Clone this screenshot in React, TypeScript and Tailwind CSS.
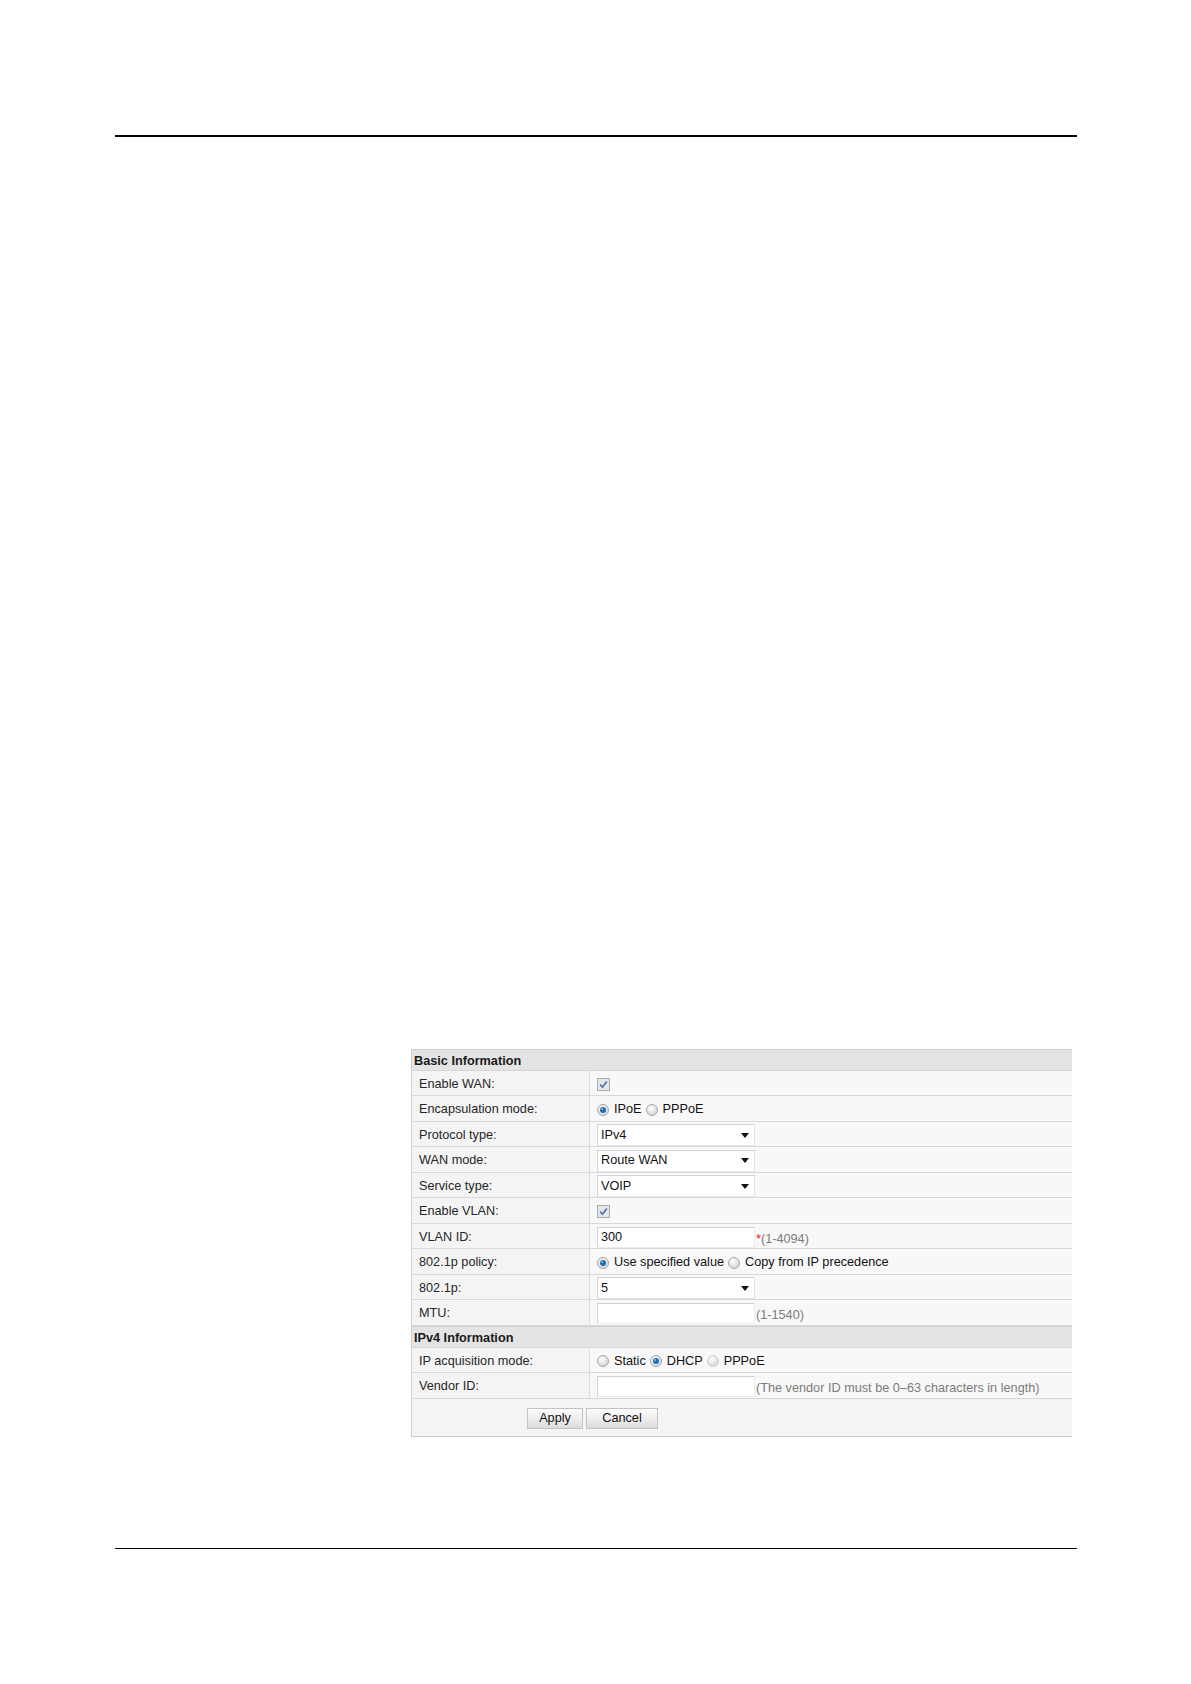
const font = { fontFamily: '"Liberation Sans", Arial, sans-serif' }

function Checkbox() {
  return (
    <svg width="13" height="13" viewBox="0 0 13 13" className="block">
      <rect x="0.5" y="0.5" width="12" height="12" fill="#e4e6ea" stroke="#a9abb0" />
      <path d="M3.2 6.6 L5.4 9.2 L9.8 3.4" fill="none" stroke="#4d6fa8" strokeWidth="1.6" />
    </svg>
  )
}

function Radio({ checked, dim }: { checked?: boolean; dim?: boolean }) {
  return (
    <svg width="12" height="12" viewBox="0 0 12 12" className="block shrink-0">
      <defs>
        <radialGradient id="rg" cx="0.4" cy="0.35" r="0.7">
          <stop offset="0" stopColor="#ffffff" />
          <stop offset="1" stopColor="#cfd1d4" />
        </radialGradient>
      </defs>
      <circle cx="6" cy="6" r="5.5" fill="url(#rg)" stroke={dim ? '#d4d4d4' : '#a8a8a8'} />
      {checked && <circle cx="6" cy="6" r="3" fill="#1f6db3" />}
      {checked && <circle cx="5.2" cy="5.1" r="1" fill="#8ec0ee" />}
    </svg>
  )
}

function Select({ value }: { value: string }) {
  return (
    <div className="flex h-[22px] w-[158px] items-center justify-between border border-[#d2d2d2] border-b-[#e6e6e6] border-r-[#e6e6e6] bg-white pl-[3px] pr-[5px]">
      <span>{value}</span>
      <svg width="8" height="5" viewBox="0 0 8 5" className="block">
        <path d="M0 0 H8 L4 5 Z" fill="#111" />
      </svg>
    </div>
  )
}

function Input({ value }: { value?: string }) {
  return (
    <div className="flex h-[21px] w-[158px] shrink-0 items-center border border-[#d2d2d2] border-b-[#ebebeb] border-r-[#ebebeb] bg-white pl-[3px]">
      {value}
    </div>
  )
}

function Hint({ children }: { children: React.ReactNode }) {
  return <span className="ml-px translate-y-[2px] text-[#7b7b7b]">{children}</span>
}

function RadioOpt({ label, checked, dim }: { label: string; checked?: boolean; dim?: boolean }) {
  return (
    <span className="flex items-center gap-[5px]">
      <Radio checked={checked} dim={dim} />
      <span>{label}</span>
    </span>
  )
}

function Row({ label, children }: { label: string; children: React.ReactNode }) {
  return (
    <div className="flex h-[25.5px] border-b border-[#d8d8d8]">
      <div className="flex w-[178px] shrink-0 items-center border-r border-[#dcdcdc] bg-[#f4f4f4] pl-[7px] pt-[3px] text-[#262626]">
        {label}
      </div>
      <div className="flex flex-1 items-center bg-[#f8f8f8] pl-[7px] pt-[3px] text-[#111]">{children}</div>
    </div>
  )
}

function Header({ title }: { title: string }) {
  return (
    <div className="flex h-[22px] items-center border-b border-[#d6d6d6] border-t border-t-[#d0d0d0] bg-[#e4e4e4] pl-[2px] pt-[3px] font-bold text-[#1a1a1a]">
      {title}
    </div>
  )
}

function Button({ label, w }: { label: string; w: string }) {
  return (
    <div
      className={`flex h-[21px] ${w} items-center justify-center border border-[#c4c4c4] bg-gradient-to-b from-[#fbfbfb] via-[#eeeeee] to-[#dcdcdc] pt-[1px] text-[#111]`}
    >
      {label}
    </div>
  )
}

export default function App() {
  return (
    <div className="h-[1684px] w-[1191px] bg-white pt-[135px] pl-[115px] pr-[114px]" style={font}>
      <div className="h-[1.5px] bg-black" />

      <div className="ml-[296px] mt-[912px] w-[661px] border-l border-b border-[#cfcfcf] text-[12.7px] leading-none">
        <Header title="Basic Information" />
        <Row label="Enable WAN:">
          <Checkbox />
        </Row>
        <Row label="Encapsulation mode:">
          <div className="flex items-center gap-[4px]">
            <RadioOpt label="IPoE" checked />
            <RadioOpt label="PPPoE" />
          </div>
        </Row>
        <Row label="Protocol type:">
          <Select value="IPv4" />
        </Row>
        <Row label="WAN mode:">
          <Select value="Route WAN" />
        </Row>
        <Row label="Service type:">
          <Select value="VOIP" />
        </Row>
        <Row label="Enable VLAN:">
          <Checkbox />
        </Row>
        <Row label="VLAN ID:">
          <Input value="300" />
          <span className="ml-px translate-y-[2px] text-[#e02020]">*</span>
          <span className="translate-y-[2px] text-[#7b7b7b]">(1-4094)</span>
        </Row>
        <Row label="802.1p policy:">
          <div className="flex items-center gap-[4px]">
            <RadioOpt label="Use specified value" checked />
            <RadioOpt label="Copy from IP precedence" />
          </div>
        </Row>
        <Row label="802.1p:">
          <Select value="5" />
        </Row>
        <Row label="MTU:">
          <Input />
          <Hint>(1-1540)</Hint>
        </Row>
        <Header title="IPv4 Information" />
        <Row label="IP acquisition mode:">
          <div className="flex items-center gap-[4px]">
            <RadioOpt label="Static" />
            <RadioOpt label="DHCP" checked />
            <RadioOpt label="PPPoE" dim />
          </div>
        </Row>
        <Row label="Vendor ID:">
          <Input />
          <Hint>(The vendor ID must be 0–63 characters in length)</Hint>
        </Row>
        <div className="flex h-[37px] items-start gap-[3px] bg-[#f4f4f4] pl-[115px] pt-[9px]">
          <Button label="Apply" w="w-[56px]" />
          <Button label="Cancel" w="w-[72px]" />
        </div>
      </div>

      <div className="mt-[111px] h-[1.5px] bg-black" />
    </div>
  )
}
